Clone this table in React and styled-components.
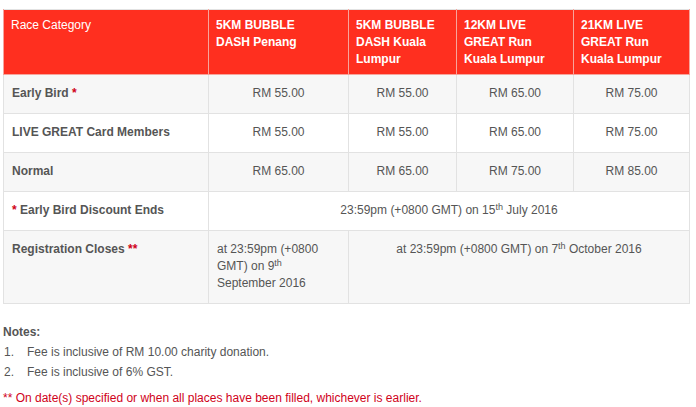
import React from "react";
import styled, { createGlobalStyle } from "styled-components";

const GlobalStyle = createGlobalStyle`
  body {
    margin: 0;
    background: #ffffff;
    font-family: "Liberation Sans", Arial, sans-serif;
  }
`;

const Page = styled.div`
  padding: 9px 7px 0 3px;
  font-size: 12px;
  color: #555555;
`;

const Table = styled.table`
  width: 686px;
  border-collapse: collapse;
  table-layout: fixed;
  border: 1px solid #e2e2e2;
`;

const HeadCell = styled.th`
  background: #ff2f1f;
  color: #ffffff;
  font-weight: ${(p) => (p.$plain ? "normal" : "bold")};
  text-align: left;
  vertical-align: top;
  line-height: 17px;
  padding: 7px 20px 6px 7px;
  border: 1px solid #f7a49c;
  border-top: none;
  height: 51px;
`;

const Row = styled.tr`
  background: ${(p) => (p.$alt ? "#f7f7f7" : "#ffffff")};
`;

const Label = styled.td`
  font-weight: bold;
  text-align: left;
  vertical-align: top;
  line-height: 17px;
  padding: 10px 8px 11px;
  border: 1px solid #e2e2e2;
`;

const Cell = styled.td`
  text-align: ${(p) => (p.$left ? "left" : "center")};
  vertical-align: top;
  line-height: 17px;
  padding: 10px 8px 11px;
  border: 1px solid #e2e2e2;
`;

const Star = styled.span`
  color: #d0021b;
`;

const Sup = styled.sup`
  font-size: 9px;
  line-height: 0;
  vertical-align: 4px;
`;

const Notes = styled.div`
  margin-top: 18px;
  line-height: 20px;
`;

const NotesTitle = styled.div`
  font-weight: bold;
`;

const List = styled.ol`
  margin: 0;
  padding: 0;
  list-style: none;
`;

const Item = styled.li`
  display: flex;
`;

const Num = styled.span`
  width: 23px;
  padding-left: 1px;
`;

const Footnote = styled.div`
  margin-top: 6px;
  color: #d0021b;
`;

const prices = [
  { label: "Early Bird", star: "*", values: ["55.00", "55.00", "65.00", "75.00"], alt: true },
  { label: "LIVE GREAT Card Members", values: ["55.00", "55.00", "65.00", "75.00"] },
  { label: "Normal", values: ["65.00", "65.00", "75.00", "85.00"], alt: true },
];

export default function App() {
  return (
    <Page>
      <GlobalStyle />
      <Table>
        <colgroup>
          <col style={{ width: 205 }} />
          <col style={{ width: 140 }} />
          <col style={{ width: 108 }} />
          <col style={{ width: 117 }} />
          <col style={{ width: 116 }} />
        </colgroup>
        <thead>
          <tr>
            <HeadCell $plain>Race Category</HeadCell>
            <HeadCell>5KM BUBBLE DASH Penang</HeadCell>
            <HeadCell>5KM BUBBLE DASH Kuala Lumpur</HeadCell>
            <HeadCell>12KM LIVE GREAT Run Kuala Lumpur</HeadCell>
            <HeadCell>21KM LIVE GREAT Run Kuala Lumpur</HeadCell>
          </tr>
        </thead>
        <tbody>
          {prices.map((r) => (
            <Row key={r.label} $alt={r.alt}>
              <Label>
                {r.label}
                {r.star && <Star> {r.star}</Star>}
              </Label>
              {r.values.map((v, i) => (
                <Cell key={i}>RM {v}</Cell>
              ))}
            </Row>
          ))}
          <Row>
            <Label>
              <Star>*</Star> Early Bird Discount Ends
            </Label>
            <Cell colSpan={4}>
              23:59pm (+0800 GMT) on 15<Sup>th</Sup> July 2016
            </Cell>
          </Row>
          <Row $alt>
            <Label>
              Registration Closes <Star>**</Star>
            </Label>
            <Cell $left>
              at 23:59pm (+0800 GMT) on 9<Sup>th</Sup> September 2016
            </Cell>
            <Cell colSpan={3}>
              at 23:59pm (+0800 GMT) on 7<Sup>th</Sup> October 2016
            </Cell>
          </Row>
        </tbody>
      </Table>
      <Notes>
        <NotesTitle>Notes:</NotesTitle>
        <List>
          <Item>
            <Num>1.</Num>
            <span>Fee is inclusive of RM 10.00 charity donation.</span>
          </Item>
          <Item>
            <Num>2.</Num>
            <span>Fee is inclusive of 6% GST.</span>
          </Item>
        </List>
        <Footnote>** On date(s) specified or when all places have been filled, whichever is earlier.</Footnote>
      </Notes>
    </Page>
  );
}
